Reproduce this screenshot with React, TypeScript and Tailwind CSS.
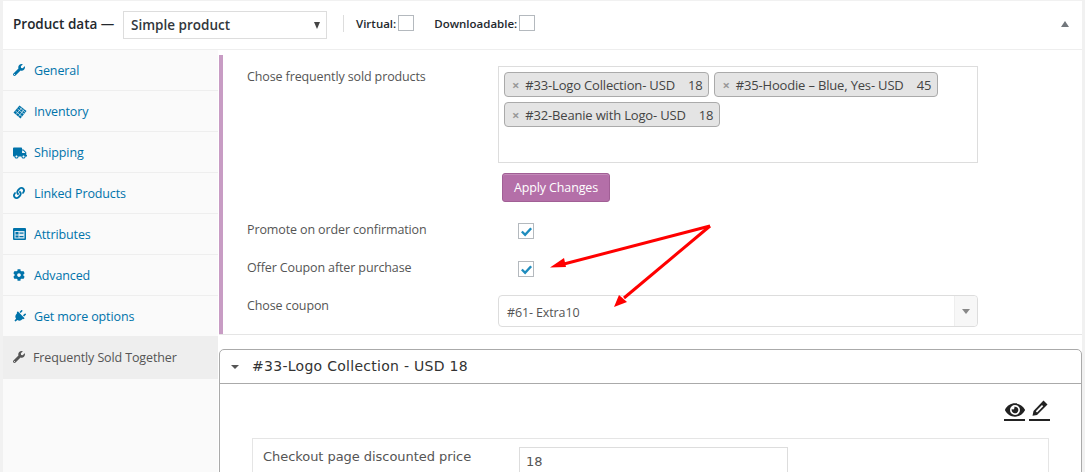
import { FaCog, FaEye, FaLink, FaPlug, FaTruck, FaWrench } from "react-icons/fa";

const InventoryIcon = () => (
  <svg viewBox="0 0 14 14" className="w-[14px] h-[14px]">
    <path d="M6.5 .5 13.5 6 7.5 13.5 .5 7.5z" fill="#0073aa" />
    <path d="M4.5 4l6.5 5M6.5 2.5l6 5M2.5 6l6.5 5.5M9 2.5l-6 7M11 4.5l-5.5 7" stroke="#e6f0f5" strokeWidth=".7" fill="none" />
  </svg>
);

const AttributesIcon = () => (
  <svg viewBox="0 0 13 12" className="w-[13px] h-[12px]">
    <rect x="0" y="0" width="13" height="12" rx="1" fill="#0073aa" />
    <rect x="1.5" y="3" width="10" height="7.5" fill="#dbe9f1" />
    <rect x="2.5" y="4" width="3" height="2.5" fill="#0073aa" />
    <rect x="6.5" y="4.5" width="4" height="1.2" fill="#0073aa" />
    <rect x="2.5" y="7.5" width="3" height="2" fill="#0073aa" />
    <rect x="6.5" y="8" width="4" height="1.2" fill="#0073aa" />
  </svg>
);

const PencilIcon = () => (
  <svg viewBox="0 0 16 16" className="w-[16px] h-[16px]">
    <path d="M11.5 .5 15.5 4.5 5 15 .5 15.8 1.5 11z" fill="#222" />
    <path d="M10 5 11.2 6.2 5 12.4 3.8 11.2z" fill="#fff" />
  </svg>
);

const tabs = [
  { name: "General", icon: <FaWrench size={12} /> },
  { name: "Inventory", icon: <InventoryIcon /> },
  { name: "Shipping", icon: <FaTruck size={14} /> },
  { name: "Linked Products", icon: <FaLink size={12} /> },
  { name: "Attributes", icon: <AttributesIcon /> },
  { name: "Advanced", icon: <FaCog size={12} /> },
  { name: "Get more options", icon: <FaPlug size={13} className="rotate-45" /> },
];

const Check = ({ on }: { on?: boolean }) => (
  <span className="w-[16px] h-[16px] border border-[#b4b9be] bg-white flex items-center justify-center shrink-0">
    {on && (
      <svg viewBox="0 0 14 14" className="w-[13px] h-[13px]">
        <path d="M2 7l3.5 3.5L12 3.5" stroke="#1e8cbe" strokeWidth="2.6" fill="none" />
      </svg>
    )}
  </span>
);

const Tag = ({ label, price }: { label: string; price: string }) => (
  <span className="h-[25px] flex items-center bg-[#e4e4e4] border border-[#aaa] rounded-[4px] pl-[7px] pr-[6px] pt-[2px] text-[13px] tracking-[-0.17px] text-[#444] whitespace-nowrap">
    <span className="text-[#999] text-[13px] font-bold mr-[6px] leading-none">×</span>
    {label}
    <span className="ml-[13px]">{price}</span>
  </span>
);

export default function App() {
  return (
    <div className="relative w-[1085px] h-[472px] overflow-hidden bg-[#f1f1f1] pl-[3px] pr-[3px] pt-px font-['Open_Sans',sans-serif] text-[12.5px] tracking-[-0.12px] text-[#555]">
      <div className="bg-white h-full flex flex-col">
        <div className="h-[49px] border-b border-[#eee] flex items-center pl-[10px] pr-[13px] shrink-0">
          <span className="text-[13.5px] tracking-normal font-semibold text-[#23282d] w-[110px] -mt-[1px]">Product data —</span>
          <div className="w-[204px] h-[28px] border border-[#ddd] flex items-center justify-between pl-[7px] pr-[6px] text-[13.5px] tracking-normal font-semibold text-[#32373c]">
            <span className="pt-[1px]">Simple product</span>
            <span className="w-0 h-0 border-x-[3.5px] border-x-transparent border-t-[7px] border-t-[#444]" />
          </div>
          <span className="w-px h-[17px] bg-[#ddd] ml-[16px] mr-[12px] -mt-[4px]" />
          <span className="font-semibold text-[11.5px] tracking-normal text-[#23282d] mr-[2px] -mt-[2px]">Virtual:</span>
          <span className="-mt-[4px]"><Check /></span>
          <span className="font-semibold text-[11.5px] tracking-normal text-[#23282d] ml-[20px] mr-[2px] -mt-[2px]">Downloadable:</span>
          <span className="-mt-[4px]"><Check /></span>
          <span className="ml-auto -mt-[2px] w-0 h-0 border-x-[4px] border-x-transparent border-b-[6px] border-b-[#72777c]" />
        </div>

        <div className="flex flex-1 min-h-0">
          <div className="w-[215px] shrink-0 bg-[#fafafa]">
            {tabs.map((t) => (
              <div key={t.name} className="h-[41px] border-b border-[#eee] flex items-start pt-[12px] text-[#0073aa]">
                <span className="w-[31px] pl-[10px] pt-[2px] flex justify-start">{t.icon}</span>
                {t.name}
              </div>
            ))}
            <div className="h-[42px] bg-[#eee] flex items-start pt-[12px] text-[#555]">
              <span className="w-[30px] pl-[10px] pt-[2px]">
                <FaWrench size={12} />
              </span>
              Frequently Sold Together
            </div>
          </div>

          <div className="flex-1 min-w-0 pl-px">
            <div className="h-[285px] pt-[5px] border-b border-[#e5e5e5] flex flex-col">
              <div className="h-[279px] border-l-[4px] border-[#c89cc4] pl-[24px] pr-[104px] pt-[11px] flex flex-col">
                <div className="flex items-start">
                  <span className="w-[251px] pt-[2px]">Chose frequently sold products</span>
                  <div className="w-[480px] h-[97px] border border-[#ddd] pl-[5px] pt-[5px] pr-2">
                    <div className="flex flex-wrap gap-x-[5px] gap-y-[5px]">
                      <Tag label="#33-Logo Collection- USD" price="18" />
                      <Tag label="#35-Hoodie – Blue, Yes- USD" price="45" />
                      <Tag label="#32-Beanie with Logo- USD" price="18" />
                    </div>
                  </div>
                </div>
                <div className="mt-[10px] ml-[255px] w-[108px] h-[29px] pt-[2px] bg-[#b46fa8] border border-[#a15f95] rounded-[3px] text-white flex items-center justify-center shadow-[inset_0_1px_0_rgba(255,255,255,0.2)]">
                  Apply Changes
                </div>
                <div className="flex items-center h-[16px] mt-[21px]">
                  <span className="w-[271px] -mt-[1px]">Promote on order confirmation</span>
                  <Check on />
                </div>
                <div className="flex items-center h-[16px] mt-[22px]">
                  <span className="w-[271px] -mt-[1px]">Offer Coupon after purchase</span>
                  <Check on />
                </div>
                <div className="flex items-center mt-[18px]">
                  <span className="w-[251px] -mt-[9px]">Chose coupon</span>
                  <div className="w-[480px] h-[32px] border border-[#ddd] rounded-[4px] flex items-center justify-between pl-[8px]">
                    <span className="pt-[5px]">#61- Extra10</span>
                    <span className="w-[23px] h-full bg-[#f7f7f7] border-l border-[#eee] flex items-center justify-center rounded-r-[4px]">
                      <span className="w-0 h-0 border-x-[4px] border-x-transparent border-t-[5px] border-t-[#888]" />
                    </span>
                  </div>
                </div>
              </div>
            </div>

            <div className="mt-[14px] h-[200px] border border-[#aaa] rounded-t-[5px] font-['DejaVu_Sans',sans-serif] tracking-normal">
              <div className="h-[34px] border-b border-[#aaa] flex items-center pl-[11px] text-[14px] tracking-[0.28px] text-[#333]">
                <span className="w-0 h-0 border-x-[4px] border-x-transparent border-t-[4px] border-t-[#555] mr-[13px]" />
                #33-Logo Collection - USD 18
              </div>
              <div className="flex justify-end gap-[4px] pr-[31px] pt-[16px]">
                <span className="w-[21px] h-[21px] border-b-2 border-[#222] flex justify-center text-[#222]">
                  <FaEye size={20} />
                </span>
                <span className="w-[21px] h-[21px] border-b-2 border-[#222] flex justify-center text-[#222]">
                  <PencilIcon />
                </span>
              </div>
              <div className="ml-[32px] mr-[32px] mt-[17px] h-[60px] border border-[#e5e5e5] flex items-start pl-[10px] pt-[8px] text-[13px] tracking-[-0.05px] text-[#555]">
                <span className="w-[256px]">Checkout page discounted price</span>
                <div className="w-[269px] h-[30px] border border-[#ddd] flex items-center pl-[6px] text-[13px]">18</div>
              </div>
            </div>
          </div>
        </div>
      </div>

      {/* red annotation arrows */}
      <svg className="absolute left-0 top-0 w-[1085px] h-[472px] pointer-events-none" viewBox="0 0 1085 472">
        <path d="M710 226 L562 264.5" stroke="#f00" strokeWidth="3" fill="none" />
        <path d="M550 267.5 L564 258 L566 267z" fill="#f00" />
        <path d="M710 226 L624 298" stroke="#f00" strokeWidth="3" fill="none" />
        <path d="M614 307 L619 295 L627 302z" fill="#f00" />
      </svg>
    </div>
  );
}
